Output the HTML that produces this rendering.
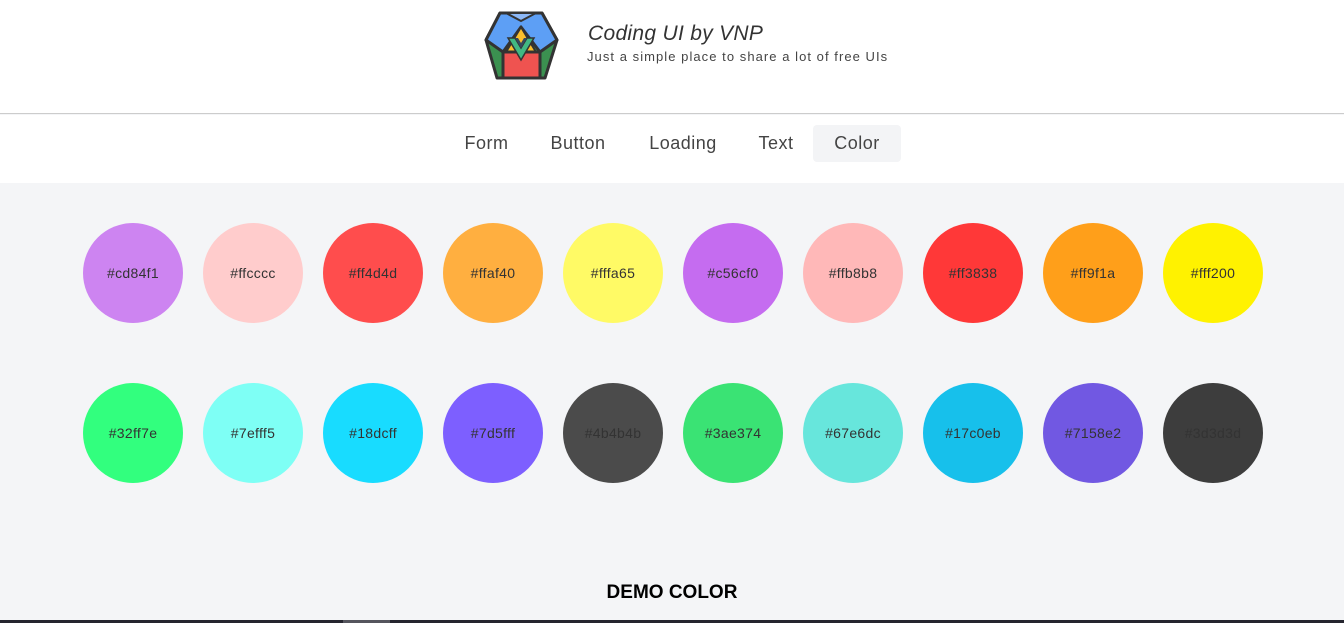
<!DOCTYPE html>
<html><head><meta charset="utf-8"><style>
*{margin:0;padding:0;box-sizing:border-box}
body{width:1344px;height:623px;overflow:hidden;background:#f4f5f7;font-family:"Liberation Sans",sans-serif;position:relative}
.header{position:absolute;left:0;top:0;width:1344px;height:114px;background:#fff;border-bottom:1px solid #ccc}
.nav{position:absolute;left:0;top:115px;width:1344px;height:68px;background:#fff}
.nav span{position:absolute;top:10px;height:37px;line-height:37px;font-size:18px;color:#444;text-align:center;letter-spacing:0.5px}
.c{position:absolute;width:100px;height:100px;border-radius:50%;font-size:14px;color:#333;display:flex;align-items:center;justify-content:center;letter-spacing:0.3px}
</style></head><body>
<div class="header">
<svg style="position:absolute;left:480px;top:8px" width="84" height="78" viewBox="0 0 84 78">
<polygon points="20,5 62,5 77,32 65,70 17,70 6,32" fill="#3b9150" stroke="#333" stroke-width="3" stroke-linejoin="round"/>
<polygon points="20,5 62,5 77,32 60,44 41,19 23,44 6,32" fill="#5d9ff5" stroke="#333" stroke-width="3" stroke-linejoin="round"/>
<polygon points="26,5 56,5 41,13" fill="#8cb8f7" stroke="#333" stroke-width="2"/>
<polygon points="41,19 56,44 26,44" fill="#fbc02d" stroke="#333" stroke-width="2"/>
<rect x="23" y="44" width="37" height="26" fill="#ef5350" stroke="#333" stroke-width="3"/>
<polygon points="28,30 35,30 41,40 47,30 54,30 41,52" fill="#41b883" stroke="#333" stroke-width="1.5"/>
<polygon points="35,30 41,40 47,30 44,30 41,35 38,30" fill="#35495e"/>
</svg>
<div style="position:absolute;left:588px;top:22px;font-size:21px;font-style:italic;color:#333;letter-spacing:0.3px">Coding UI by VNP</div>
<div style="position:absolute;left:587px;top:49px;font-size:13px;color:#444;letter-spacing:1.05px">Just a simple place to share a lot of free UIs</div>
</div>
<div class="nav">
<span style="left:455px;width:63px">Form</span>
<span style="left:540px;width:76px">Button</span>
<span style="left:638px;width:90px">Loading</span>
<span style="left:750px;width:52px">Text</span>
<span style="left:813px;width:88px;background:#f3f4f6;border-radius:4px">Color</span>
</div>
<div class="c" style="left:83px;top:223px;background:#cd84f1">#cd84f1</div>
<div class="c" style="left:203px;top:223px;background:#ffcccc">#ffcccc</div>
<div class="c" style="left:323px;top:223px;background:#ff4d4d">#ff4d4d</div>
<div class="c" style="left:443px;top:223px;background:#ffaf40">#ffaf40</div>
<div class="c" style="left:563px;top:223px;background:#fffa65">#fffa65</div>
<div class="c" style="left:683px;top:223px;background:#c56cf0">#c56cf0</div>
<div class="c" style="left:803px;top:223px;background:#ffb8b8">#ffb8b8</div>
<div class="c" style="left:923px;top:223px;background:#ff3838">#ff3838</div>
<div class="c" style="left:1043px;top:223px;background:#ff9f1a">#ff9f1a</div>
<div class="c" style="left:1163px;top:223px;background:#fff200">#fff200</div>
<div class="c" style="left:83px;top:383px;background:#32ff7e">#32ff7e</div>
<div class="c" style="left:203px;top:383px;background:#7efff5">#7efff5</div>
<div class="c" style="left:323px;top:383px;background:#18dcff">#18dcff</div>
<div class="c" style="left:443px;top:383px;background:#7d5fff">#7d5fff</div>
<div class="c" style="left:563px;top:383px;background:#4b4b4b">#4b4b4b</div>
<div class="c" style="left:683px;top:383px;background:#3ae374">#3ae374</div>
<div class="c" style="left:803px;top:383px;background:#67e6dc">#67e6dc</div>
<div class="c" style="left:923px;top:383px;background:#17c0eb">#17c0eb</div>
<div class="c" style="left:1043px;top:383px;background:#7158e2">#7158e2</div>
<div class="c" style="left:1163px;top:383px;background:#3d3d3d">#3d3d3d</div>
<div style="position:absolute;left:0;width:1344px;top:582px;text-align:center;font-size:19px;font-weight:bold;color:#000">DEMO COLOR</div>
<div style="position:absolute;left:0;top:620px;width:1344px;height:3px;background:#25252f"></div>
<div style="position:absolute;left:343px;top:620px;width:47px;height:3px;background:#55555d"></div>
</body></html>
